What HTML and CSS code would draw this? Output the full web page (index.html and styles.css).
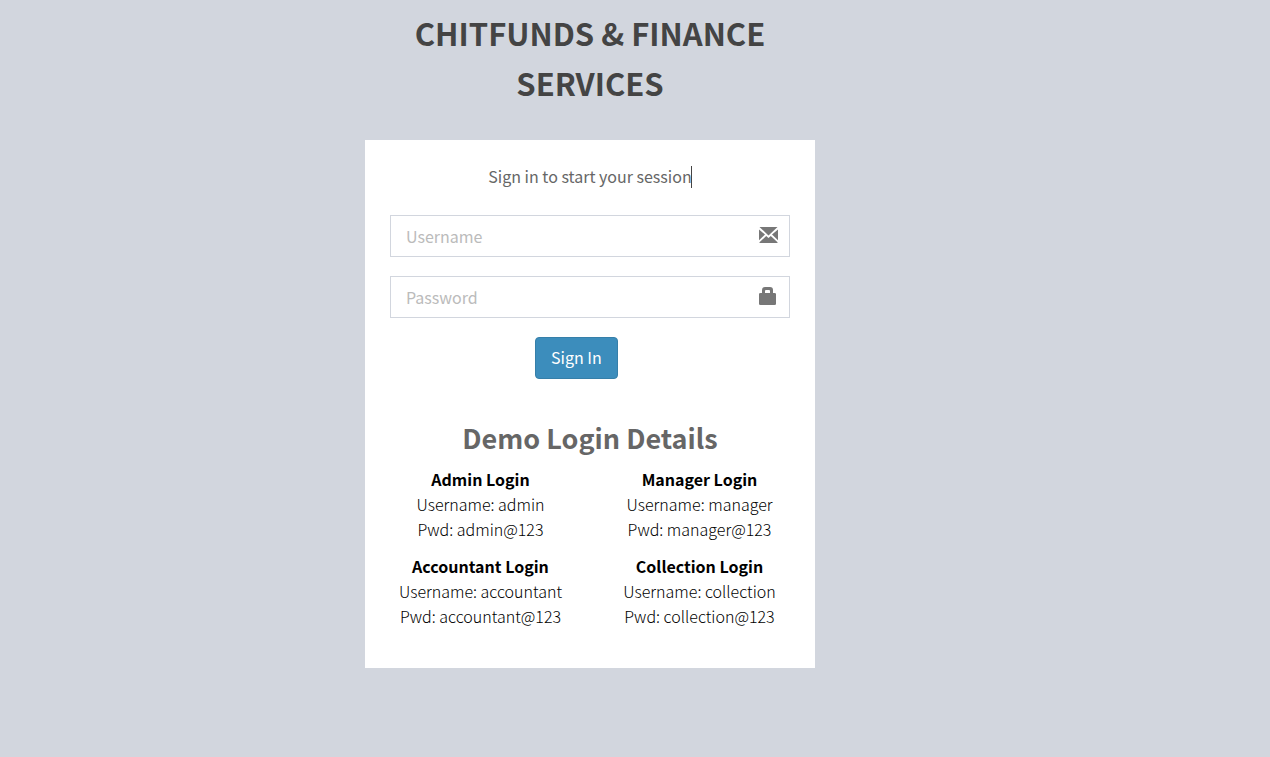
FILE: index.html
```html
<!DOCTYPE html>
<html lang="en">
<head>
<meta charset="UTF-8">
<meta name="viewport" content="width=device-width, initial-scale=1.0">
<title>Chitfunds &amp; Finance Services | Log in</title>
<link rel="stylesheet" href="styles.css">
</head>
<body>
    <main class="login-box">
        <h1 class="login-logo">CHITFUNDS &amp; FINANCE SERVICES</h1>

        <div class="login-box-body">
            <p class="login-box-msg"><span class="caret-text">Sign in to start your session</span></p>

            <form action="#" method="post">
                <div class="form-group">
                    <input type="text" class="form-control" name="username" placeholder="Username" aria-label="Username">
                    <svg class="form-icon" viewBox="0 0 20 20" aria-hidden="true">
                        <path d="M.5 2H18.5L9.5 10.5ZM0 4.4L6 9.6L0 15.2ZM19 4.4V15.2L13 9.6ZM7.2 11L9.5 13L11.8 11L18.5 17.2V18H.5V17.2Z"/>
                    </svg>
                </div>
                <div class="form-group">
                    <input type="password" class="form-control" name="password" placeholder="Password" aria-label="Password">
                    <svg class="form-icon" viewBox="0 0 20 20" aria-hidden="true">
                        <path fill-rule="evenodd" d="M3 7V4Q3 1 6 1H11Q14 1 14 4V7H15.5Q17 7 17 8V18Q17 19 15.5 19H1.5Q0 19 0 18V8Q0 7 1.5 7ZM6 7H11V5Q11 4 10 4H7Q6 4 6 5Z"/>
                    </svg>
                </div>
                <button type="submit" class="btn-primary">Sign In</button>
            </form>

            <h2 class="demo-title">Demo Login Details</h2>
            <div class="demo-logins">
                <p><b>Admin Login</b><br>Username: admin<br>Pwd: admin@123</p>
                <p><b>Manager Login</b><br>Username: manager<br>Pwd: manager@123</p>
                <p><b>Accountant Login</b><br>Username: accountant<br>Pwd: accountant@123</p>
                <p><b>Collection Login</b><br>Username: collection<br>Pwd: collection@123</p>
            </div>
        </div>
    </main>
</body>
</html>
```

FILE: styles.css
```css
* {
    box-sizing: border-box;
}
body {
    margin: 0;
    padding: 8px 90px 8px 0;
    min-height: 100vh;
    background-color: #d2d6de;
    color: #333;
    font-family: "Source Sans Pro", "Noto Sans CJK SC", sans-serif;
    font-size: 16px;
    line-height: 25px;
}
h1, h2, p {
    margin: 0;
}

.login-box {
    max-width: 450px;
    margin: 0 auto;
}
.login-logo {
    margin-bottom: 32px;
    font-size: 31px;
    line-height: 50px;
    text-align: center;
    color: #444;
}
.login-box-body {
    padding: 24px 25px 39px;
    background-color: #fff;
    color: #666;
}
.login-box-msg {
    padding-bottom: 26px;
    text-align: center;
}
.caret-text {
    position: relative;
}
.caret-text::after {
    content: "";
    position: absolute;
    top: 2px;
    bottom: 0;
    right: 0;
    border-right: 1px solid #444;
}

/* Form */
.form-group {
    position: relative;
    margin-bottom: 19px;
}
.form-control {
    display: block;
    width: 100%;
    height: 42px;
    padding: 7px 50px 7px 15px;
    border: 1px solid #d2d6de;
    border-radius: 0;
    background-color: #fff;
    color: #555;
    font: inherit;
}
.form-control::placeholder {
    color: #bbb;
    opacity: 1;
}
.form-icon {
    position: absolute;
    top: 10px;
    right: 11px;
    width: 20px;
    height: 20px;
    fill: #777;
}
.btn-primary {
    display: block;
    height: 42px;
    margin-left: 145px;
    padding: 0 15px 2px;
    border: 1px solid #367fa9;
    border-radius: 4px;
    background-color: #3c8dbc;
    color: #fff;
    font: inherit;
    cursor: pointer;
}

/* Demo accounts */
.demo-title {
    margin: 42px 0 13px;
    font-size: 27px;
    line-height: 33px;
    text-align: center;
}
.demo-logins {
    display: grid;
    grid-template-columns: 1fr 1fr;
    gap: 12px 38px;
    text-align: center;
    font-weight: 300;
    color: #000;
}
.demo-logins b {
    font-weight: 700;
}
```
